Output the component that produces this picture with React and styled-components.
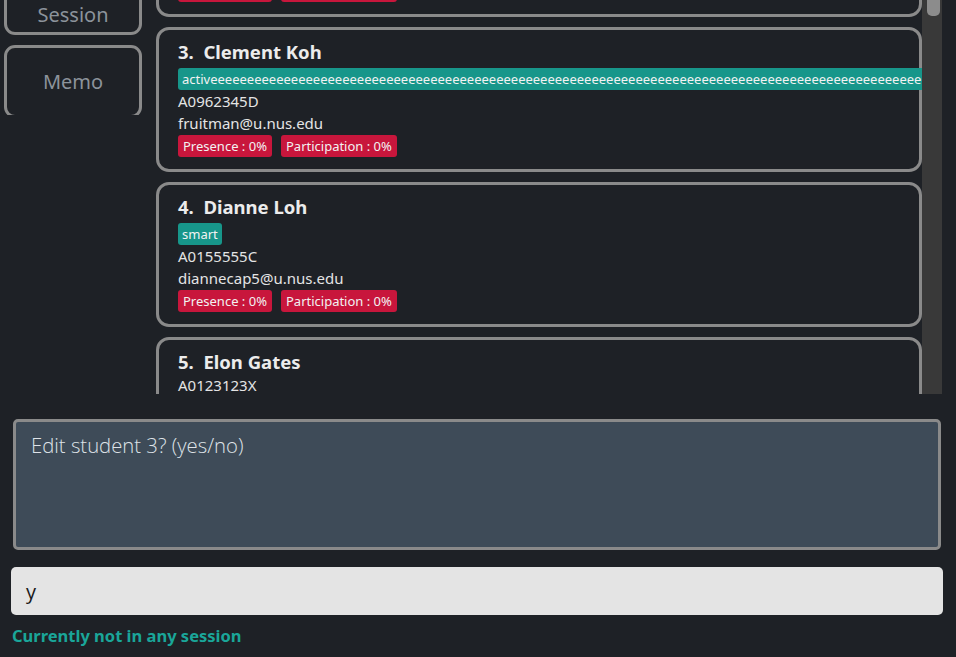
import React from "react";
import styled, { createGlobalStyle } from "styled-components";

const Global = createGlobalStyle`
  html, body { margin: 0; padding: 0; background: #1e2126; }
  body { font-family: "Noto Sans", "Open Sans", sans-serif; overflow: hidden; }
  * { box-sizing: border-box; }
`;

const Page = styled.div`
  width: 956px;
  height: 657px;
  background: #1e2126;
  display: flex;
  flex-direction: column;
  overflow: hidden;
`;

const Top = styled.div`
  display: flex;
  height: 394px;
  flex: none;
`;

const NavColumn = styled.div`
  width: 156px;
  flex: none;
  padding-left: 4px;
`;

const NavClip = styled.div`
  width: 138px;
  height: 115px;
  overflow: hidden;
`;

const NavInner = styled.div`
  display: flex;
  flex-direction: column;
  gap: 10px;
  margin-top: -22px;
`;

const NavButton = styled.div`
  height: ${(p) => p.$h}px;
  border: 3px solid #8a8a8a;
  border-radius: 11px;
  display: flex;
  justify-content: center;
  padding-top: 21px;
  color: #8c939b;
  font-size: 20px;
  line-height: 26px;
  flex: none;
`;

const ListPanel = styled.div`
  flex: 1;
  display: flex;
  min-width: 0;
`;

const ListViewport = styled.div`
  width: 766px;
  height: 394px;
  overflow: hidden;
  flex: none;
`;

const ListInner = styled.div`
  display: flex;
  flex-direction: column;
  gap: 10px;
  margin-top: -283px;
`;

const ScrollTrack = styled.div`
  width: 20px;
  height: 394px;
  background: #393939;
  flex: none;
  padding: 0 2px 0 5px;
`;

const ScrollThumb = styled.div`
  height: 16px;
  background: #8c8c8c;
  border-radius: 0 0 5px 5px;
`;

const Card = styled.div`
  height: 145px;
  flex: none;
  border: 3px solid #8a8a8a;
  border-radius: 13px;
  padding: 10px 0 0 19px;
  color: #e6e6e6;
`;

const Name = styled.div`
  font-size: 18.5px;
  font-weight: bold;
  line-height: 24px;
  color: #ececec;
  white-space: pre;
`;

const TagRow = styled.div`
  display: flex;
  margin-top: 4px;
  white-space: nowrap;
`;

const Tag = styled.span`
  background: #17968a;
  color: #f2f2f2;
  font-size: 13px;
  line-height: 22px;
  height: 22px;
  padding: 0 4px;
  border-radius: 3px;
  flex: none;
`;

const Line = styled.div`
  font-size: 15px;
  line-height: 22px;
  color: #e4e4e4;
`;

const BadgeRow = styled.div`
  display: flex;
  gap: 9px;
  margin-top: 1px;
`;

const Badge = styled.span`
  background: #c8163c;
  color: #f2f2f2;
  font-size: 13px;
  line-height: 22px;
  height: 22px;
  padding: 0 5px;
  border-radius: 3px;
`;

const Bottom = styled.div`
  display: flex;
  flex-direction: column;
  padding: 25px 13px 0 11px;
`;

const ResultBox = styled.div`
  height: 131px;
  margin: 0 2px 0 2px;
  background: #3e4b58;
  border: 3px solid #8a8a8a;
  border-radius: 5px;
  padding: 9px 15px;
  color: #dfe3e8;
  font-family: "Open Sans", "Noto Sans", sans-serif;
  font-weight: 300;
  font-size: 20.3px;
  line-height: 28px;
`;

const CommandBox = styled.div`
  margin-top: 17px;
  height: 48px;
  background: #e4e4e4;
  border-radius: 5px;
  padding: 0 15px;
  display: flex;
  align-items: center;
  color: #1a1a1a;
  font-family: "Open Sans", "Noto Sans", sans-serif;
  font-size: 20px;
`;

const Status = styled.div`
  margin-top: 10px;
  margin-left: 1px;
  color: #1aa699;
  font-size: 16.5px;
  font-weight: bold;
  line-height: 22px;
`;

const longTag = "active" + "e".repeat(160);

const students = [
  { n: 1, name: "Alex Yeoh", tags: ["friends"], id: "A0123456X", email: "alexyeoh@u.nus.edu" },
  { n: 2, name: "Bernice Yu", tags: ["colleagues"], id: "A0234567Y", email: "berniceyu@u.nus.edu" },
  { n: 3, name: "Clement Koh", tags: [longTag], id: "A0962345D", email: "fruitman@u.nus.edu" },
  { n: 4, name: "Dianne Loh", tags: ["smart"], id: "A0155555C", email: "diannecap5@u.nus.edu" },
  { n: 5, name: "Elon Gates", tags: [], id: "A0123123X", email: "elongates@u.nus.edu" },
];

function StudentCard({ s }) {
  return (
    <Card>
      <Name>{`${s.n}.  ${s.name}`}</Name>
      {s.tags.length > 0 && (
        <TagRow>
          {s.tags.map((t) => (
            <Tag key={t}>{t}</Tag>
          ))}
        </TagRow>
      )}
      <Line>{s.id}</Line>
      <Line>{s.email}</Line>
      <BadgeRow>
        <Badge>Presence : 0%</Badge>
        <Badge>Participation : 0%</Badge>
      </BadgeRow>
    </Card>
  );
}

export default function App() {
  return (
    <Page>
      <Global />
      <Top>
        <NavColumn>
          <NavClip>
            <NavInner>
              <NavButton $h={57}>Session</NavButton>
              <NavButton $h={73}>Memo</NavButton>
            </NavInner>
          </NavClip>
        </NavColumn>
        <ListPanel>
          <ListViewport>
            <ListInner>
              {students.map((s) => (
                <StudentCard key={s.n} s={s} />
              ))}
            </ListInner>
          </ListViewport>
          <ScrollTrack>
            <ScrollThumb />
          </ScrollTrack>
        </ListPanel>
      </Top>
      <Bottom>
        <ResultBox>Edit student 3? (yes/no)</ResultBox>
        <CommandBox>y</CommandBox>
        <Status>Currently not in any session</Status>
      </Bottom>
    </Page>
  );
}
